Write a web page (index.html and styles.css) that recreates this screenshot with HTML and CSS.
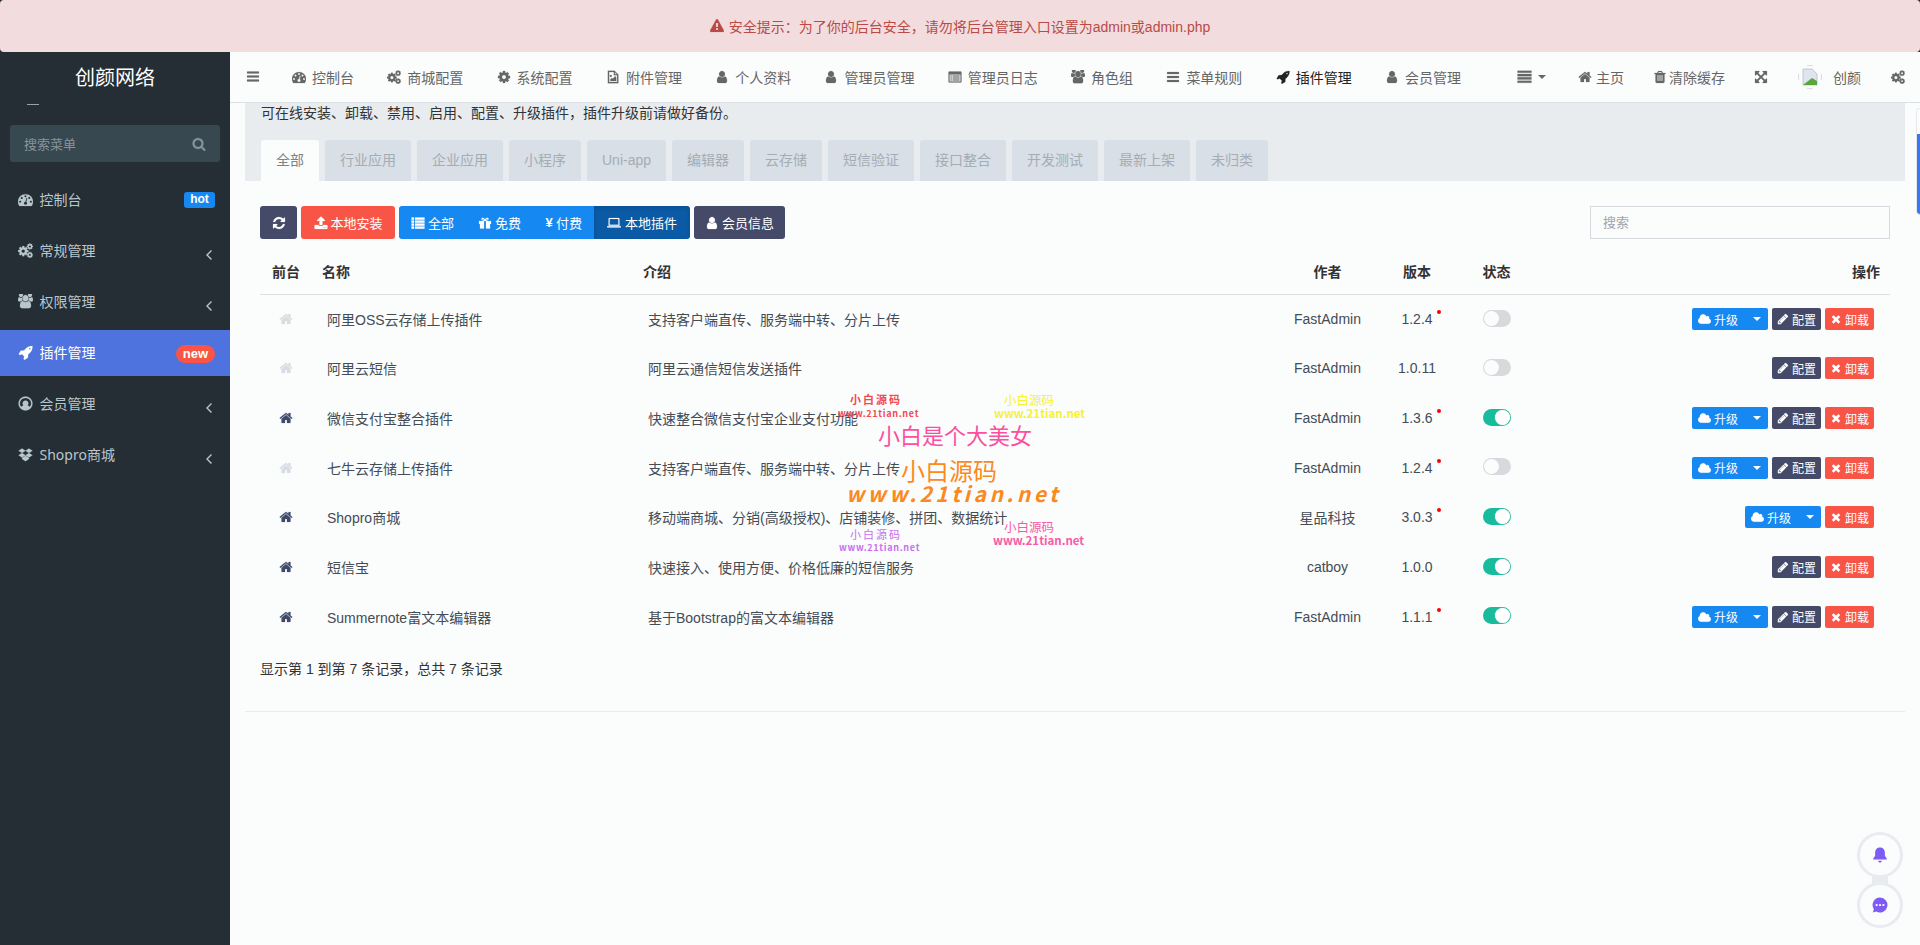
FILE: index.html
```html
<!DOCTYPE html>
<html lang="zh-CN">
<head>
    <meta charset="UTF-8">
    <title>插件管理</title>
    <link rel="stylesheet" href="styles.css">
</head>
<body>
    <svg class="sprite" xmlns="http://www.w3.org/2000/svg">
        <defs>
            <path id="p-gear" d="M1152 896q0-106-75-181t-181-75-181 75-75 181 75 181 181 75 181-75 75-181zm512-109v222q0 12-8 23t-20 13l-185 28q-19 54-39 91 35 50 107 138 10 12 10 25t-9 23q-27 37-99 108t-94 71q-12 0-26-9l-138-108q-44 23-91 38-16 136-29 186-7 28-36 28h-222q-14 0-24.500-8.500t-11.500-21.500l-28-184q-49-16-90-37l-141 107q-10 9-25 9-14 0-25-11-126-114-165-168-7-10-7-23 0-12 8-23 15-21 51-66.500t54-70.500q-27-50-41-99l-183-27q-13-2-21-12.500t-8-23.500v-222q0-12 8-23t19-13l186-28q14-46 39-92-40-57-107-138-10-12-10-24 0-10 9-23 26-36 98.500-107.500t94.500-71.500q13 0 26 10l138 107q44-23 91-38 16-136 29-186 7-28 36-28h222q14 0 24.500 8.500t11.500 21.500l28 184q49 16 90 37l142-107q9-9 24-9 13 0 25 10 129 119 165 170 7 8 7 22 0 12-8 23-15 21-51 66.500t-54 70.500q26 50 41 98l183 28q13 2 21 12.500t8 23.500z"/>
            <symbol id="i-gear" viewBox="0 0 1792 1792"><use href="#p-gear"/></symbol>
            <symbol id="i-cogs" viewBox="0 0 1792 1792">
                <use href="#p-gear" transform="translate(-90 250) scale(.8)"/>
                <use href="#p-gear" transform="translate(990 -20) scale(.48)"/>
                <use href="#p-gear" transform="translate(990 990) scale(.48)"/>
            </symbol>
            <symbol id="i-bars" viewBox="0 0 1792 1792"><path d="M1664 1344v128q0 26-19 45t-45 19h-1408q-26 0-45-19t-19-45v-128q0-26 19-45t45-19h1408q26 0 45 19t19 45zm0-512v128q0 26-19 45t-45 19h-1408q-26 0-45-19t-19-45v-128q0-26 19-45t45-19h1408q26 0 45 19t19 45zm0-512v128q0 26-19 45t-45 19h-1408q-26 0-45-19t-19-45v-128q0-26 19-45t45-19h1408q26 0 45 19t19 45z"/></symbol>
            <symbol id="i-justify" viewBox="0 0 1792 1792"><path d="M64 200h1664v256h-1664zM64 600h1664v256h-1664zM64 1000h1664v256h-1664zM64 1400h1664v256h-1664z"/></symbol>
            <symbol id="i-dashboard" viewBox="0 0 1792 1792"><path d="M384 1152q0-53-37.500-90.500t-90.500-37.500-90.500 37.500-37.500 90.500 37.500 90.500 90.500 37.500 90.500-37.500 37.500-90.500zm192-448q0-53-37.500-90.500t-90.500-37.500-90.500 37.500-37.500 90.500 37.500 90.500 90.500 37.500 90.500-37.500 37.500-90.500zm428 481l101-382q6-26-7.500-48.500t-38.500-29.500-48 6.500-30 39.500l-101 382q-60 5-107 43.500t-63 98.500q-20 77 20 146t117 89 146-20 89-117q16-60-6-117t-72-91zm660-33q0-53-37.500-90.500t-90.500-37.500-90.500 37.500-37.500 90.500 37.500 90.500 90.500 37.500 90.500-37.500 37.500-90.500zm-640-640q0-53-37.500-90.500t-90.500-37.500-90.500 37.500-37.500 90.500 37.500 90.500 90.500 37.500 90.500-37.500 37.500-90.500zm448 192q0-53-37.500-90.500t-90.500-37.500-90.500 37.500-37.500 90.500 37.500 90.500 90.500 37.500 90.500-37.500 37.500-90.500zm320 448q0 261-141 483-19 29-54 29h-1402q-35 0-54-29-141-221-141-483 0-182 71-348t191-286 286-191 348-71 348 71 286 191 191 286 71 348z"/></symbol>
            <symbol id="i-file-image" viewBox="0 0 1792 1792"><path fill-rule="evenodd" d="M240 96h860l480 480v1120h-1340zM400 256v1280h1020v-860h-420v-420zM1130 290v256h256zM620 640a120 120 0 1 0 .1 0zM560 1408v-220l180-180 120 120 320-320 120 120v480z"/></symbol>
            <symbol id="i-user" viewBox="0 0 1792 1792"><path d="M1536 1399q0 109-62.500 187t-150.500 78h-854q-88 0-150.500-78t-62.500-187q0-85 8.500-160.500t31.500-152 58.500-131 94-89 134.500-34.500q131 128 313 128t313-128q76 0 134.500 34.500t94 89 58.500 131 31.500 152 8.500 160.500zm-256-887q0 159-112.500 271.500t-271.500 112.500-271.500-112.500-112.500-271.500 112.500-271.500 271.500-112.500 271.500 112.500 112.500 271.500z"/></symbol>
            <symbol id="i-list-alt" viewBox="0 0 1792 1792"><path fill-rule="evenodd" d="M190 190h1412q126 0 126 126v1160q0 126-126 126h-1412q-126 0-126-126v-1160q0-126 126-126zM192 576v896h1408v-896zM320 704h160v128h-160zM600 704h872v128h-872zM320 960h160v128h-160zM600 960h872v128h-872zM320 1216h160v128h-160zM600 1216h872v128h-872z"/></symbol>
            <symbol id="i-users" viewBox="0 0 1920 1920"><path transform="translate(0 -160) scale(1 1.1)" d="M593 896q-162 5-265 128h-134q-82 0-138-40.500t-56-118.500q0-353 124-353 6 0 43.500 21t97.500 42.500 119 21.500q67 0 133-23-5 37-5 66 0 139 81 256zm1071 637q0 120-73 189.500t-194 69.500h-874q-121 0-194-69.500t-73-189.500q0-53 3.500-103.500t14-109 26.500-108.500 43-97.500 62-81 85.500-53.500 111.500-20q10 0 43 21.500t73 48 107 48 135 21.500 135-21.500 107-48 73-48 43-21.500q61 0 111.500 20t85.500 53.500 62 81 43 97.500 26.500 108.500 14 109 3.500 103.500zm-1024-1277q0 106-75 181t-181 75-181-75-75-181 75-181 181-75 181 75 75 181zm704 384q0 159-112.500 271.500t-271.500 112.500-271.500-112.500-112.500-271.500 112.500-271.500 271.500-112.500 271.500 112.500 112.500 271.500zm576 225q0 78-56 118.500t-138 40.500h-134q-103-123-265-128 81-117 81-256 0-29-5-66 66 23 133 23 59 0 119-21.500t97.500-42.500 43.500-21q124 0 124 353zm-128-609q0 106-75 181t-181 75-181-75-75-181 75-181 181-75 181 75 75 181z"/></symbol>
            <symbol id="i-rocket" viewBox="0 0 1792 1792"><path d="M1504 448q0-40-28-68t-68-28-68 28-28 68 28 68 68 28 68-28 28-68zm224-288q0 249-75.500 430.500t-253.500 360.500q-81 80-195 176l-20 379q-2 16-16 26l-384 224q-7 4-16 4-12 0-23-9l-64-64q-13-14-8-32l85-276-281-281-276 85q-3 1-9 1-14 0-23-9l-64-64q-17-19-5-39l224-384q10-14 26-16l379-20q96-114 176-195 188-187 358-258t431-71q14 0 24 9.500t10 22.500z"/></symbol>
            <symbol id="i-home" viewBox="0 0 1792 1792"><path d="M1472 992v480q0 26-19 45t-45 19h-384v-384h-256v384h-384q-26 0-45-19t-19-45v-480q0-1 .5-3t.5-3l575-474 575 474q1 2 1 6zm223-69l-62 74q-8 9-21 11h-3q-13 0-21-7l-692-577-692 577q-12 8-24 7-13-2-21-11l-62-74q-8-10-7-23.500t11-21.500l719-599q32-26 76-26t76 26l244 204v-195q0-14 9-23t23-9h192q14 0 23 9t9 23v408l219 182q10 8 11 21.500t-7 23.500z"/></symbol>
            <symbol id="i-trash" viewBox="0 0 1792 1792"><path d="M704 1376v-704q0-14-9-23t-23-9h-64q-14 0-23 9t-9 23v704q0 14 9 23t23 9h64q14 0 23-9t9-23zm256 0v-704q0-14-9-23t-23-9h-64q-14 0-23 9t-9 23v704q0 14 9 23t23 9h64q14 0 23-9t9-23zm256 0v-704q0-14-9-23t-23-9h-64q-14 0-23 9t-9 23v704q0 14 9 23t23 9h64q14 0 23-9t9-23zm-544-992h448l-48-117q-7-9-17-11h-317q-10 2-17 11zm928 32v64q0 14-9 23t-23 9h-96v948q0 83-47 143.500t-113 60.500h-832q-66 0-113-58.500t-47-141.500v-952h-96q-14 0-23-9t-9-23v-64q0-14 9-23t23-9h309l70-167q15-37 54-63t79-26h320q40 0 79 26t54 63l70 167h309q14 0 23 9t9 23z"/></symbol>
            <symbol id="i-expand" viewBox="0 0 1792 1792"><path d="M1411 541l-355 355 355 355 144-144q29-31 70-14 39 17 39 59v448q0 26-19 45t-45 19h-448q-42 0-59-40-17-39 14-69l144-144-355-355-355 355 144 144q31 30 14 69-17 40-59 40h-448q-26 0-45-19t-19-45v-448q0-42 40-59 39-17 69 14l144 144 355-355-355-355-144 144q-19 19-45 19-12 0-24-5-40-17-40-59v-448q0-26 19-45t45-19h448q42 0 59 40 17 39-14 69l-144 144 355 355 355-355-144-144q-31-30-14-69 17-40 59-40h448q26 0 45 19t19 45v448q0 42-39 59-13 5-25 5-26 0-45-19z"/></symbol>
            <symbol id="i-warning" viewBox="0 0 1792 1792"><path d="M1024 1375v-190q0-14-9.500-23.500t-22.500-9.500h-192q-13 0-22.500 9.500t-9.500 23.500v190q0 14 9.500 23.500t22.500 9.500h192q13 0 22.500-9.500t9.500-23.500zm-2-374l18-459q0-12-10-19-13-11-24-11h-220q-11 0-24 11-10 7-10 21l17 457q0 10 10 16.500t24 6.500h185q14 0 23.500-6.500t10.500-16.500zm-14-934l768 1408q35 63-2 126-17 29-46.500 46t-63.500 17h-1536q-34 0-63.500-17t-46.500-46q-37-63-2-126l768-1408q17-31 47-49t65-18 65 18 47 49z"/></symbol>
            <symbol id="i-search" viewBox="0 0 1792 1792"><path d="M1216 832q0-185-131.500-316.500t-316.500-131.500-316.500 131.500-131.500 316.500 131.500 316.500 316.500 131.500 316.500-131.500 131.500-316.500zm512 832q0 52-38 90t-90 38q-54 0-90-38l-343-342q-179 124-399 124-143 0-273.500-55.500t-225-150-150-225-55.500-273.500 55.500-273.500 150-225 225-150 273.500-55.500 273.500 55.500 225 150 150 225 55.500 273.500q0 220-124 399l343 343q37 37 37 90z"/></symbol>
            <symbol id="i-user-circle" viewBox="0 0 1792 1792"><path fill-rule="evenodd" d="M896 64a832 832 0 1 0 .1 0zM896 224a672 672 0 0 1 520 1098q-100-170-280-220a330 330 0 1 0-480 0q-180 50-280 220a672 672 0 0 1 520-1098z"/></symbol>
            <symbol id="i-dropbox" viewBox="0 0 1792 1792"><path d="M480 180l416 270-416 270-416-270zM1312 180l416 270-416 270-416-270zM64 990l416-270 416 270-416 270zM1312 720l416 270-416 270-416-270zM480 1320l416-270 416 270v100l-416 270-416-270z"/></symbol>
            <symbol id="i-refresh" viewBox="0 0 1792 1792"><path d="M1639 1056q0 5-1 7-64 268-268 434.500t-478 166.500q-146 0-282.500-55t-243.500-157l-129 129q-19 19-45 19t-45-19-19-45v-448q0-26 19-45t45-19h448q26 0 45 19t19 45-19 45l-137 137q71 66 161 102t187 36q134 0 250-65t186-179q11-17 53-117 8-23 30-23h192q13 0 22.500 9.500t9.500 22.500zm25-800v448q0 26-19 45t-45 19h-448q-26 0-45-19t-19-45 19-45l138-138q-148-137-349-137-134 0-250 65t-186 179q-11 17-53 117-8 23-30 23h-199q-13 0-22.500-9.500t-9.500-22.500v-7q65-268 270-434.500t480-166.500q146 0 284 55.500t245 156.500l130-129q19-19 45-19t45 19 19 45z"/></symbol>
            <symbol id="i-upload" viewBox="0 0 1792 1792"><path d="M1344 1472q0-26-19-45t-45-19-45 19-19 45 19 45 45 19 45-19 19-45zm256 0q0-26-19-45t-45-19-45 19-19 45 19 45 45 19 45-19 19-45zm128-224v320q0 40-28 68t-68 28h-1472q-40 0-68-28t-28-68v-320q0-40 28-68t68-28h427q21 56 70.500 92t110.500 36h256q61 0 110.500-36t70.500-92h427q40 0 68 28t28 68zm-325-648q-17 40-59 40h-256v448q0 26-19 45t-45 19h-256q-26 0-45-19t-19-45v-448h-256q-42 0-59-40-17-39 14-69l448-448q18-19 45-19t45 19l448 448q31 30 14 69z"/></symbol>
            <symbol id="i-list" viewBox="0 0 1792 1792"><path d="M64 192h320v272h-320zM512 192h1216v272h-1216zM64 576h320v272h-320zM512 576h1216v272h-1216zM64 960h320v272h-320zM512 960h1216v272h-1216zM64 1344h320v272h-320zM512 1344h1216v272h-1216z"/></symbol>
            <symbol id="i-gift" viewBox="0 0 1792 1792"><path fill-rule="evenodd" d="M128 640h576v-70q-260-10-260-190 0-150 150-150 130 0 302 200 172-200 302-200 150 0 150 150 0 180-260 190v70h576v384h-128v576h-512v-960h-256v960h-512v-576h-128zM800 540q-110-150-200-150-50 0-50 50 0 100 250 100zM992 540q250 0 250-100 0-50-50-50-90 0-200 150z"/></symbol>
            <symbol id="i-laptop" viewBox="0 0 1792 1792"><path fill-rule="evenodd" d="M300 256h1192q96 0 96 96v896h-1384v-896q0-96 96-96zM332 384v736h1128v-736zM0 1312h1792v64q0 96-96 96h-1600q-96 0-96-96z"/></symbol>
            <symbol id="i-cloud" viewBox="0 0 1920 1792"><path d="M1920 1216q0 159-112.500 271.500t-271.500 112.500h-1088q-185 0-316.500-131.500t-131.500-316.500q0-132 71-241.500t187-163.500q-2-28-2-43 0-212 150-362t362-150q158 0 286.500 88t187.500 230q70-62 166-62 106 0 181 75t75 181q0 75-41 138 129 30 213 134.500t84 239.500z"/></symbol>
            <symbol id="i-pencil" viewBox="0 0 1792 1792"><path d="M491 1536l91-91-235-235-91 91v107h128v128h107zm523-928q0-22-22-22-10 0-17 7l-542 542q-7 7-7 17 0 22 22 22 10 0 17-7l542-542q7-7 7-17zm-54-192l416 416-832 832h-416v-416zm683 96q0 53-37 90l-166 166-416-416 166-165q36-38 90-38 53 0 91 38l235 234q37 39 37 91z"/></symbol>
            <symbol id="i-times" viewBox="0 0 1792 1792"><path d="M1490 1322q0 40-28 68l-136 136q-28 28-68 28t-68-28l-294-294-294 294q-28 28-68 28t-68-28l-136-136q-28-28-28-68t28-68l294-294-294-294q-28-28-28-68t28-68l136-136q28-28 68-28t68 28l294 294 294-294q28-28 68-28t68 28l136 136q28 28 28 68t-28 68l-294 294 294 294q28 28 28 68z"/></symbol>
            <symbol id="i-angle" viewBox="0 0 8 12"><path d="M6.500 1.500L2 6l4.500 4.500" fill="none" stroke="currentColor" stroke-width="1.400"/></symbol>
            <symbol id="i-bell" viewBox="0 0 24 24"><path d="M12 2c-4 0-6.500 3-6.500 7v4L3 16.500V18h18v-1.500L18.500 13V9c0-4-2.500-7-6.500-7zM9.500 19.500h5c-.3 1.500-1.200 2.500-2.500 2.500s-2.200-1-2.500-2.500z"/></symbol>
            <symbol id="i-chat" viewBox="0 0 24 24"><path fill-rule="evenodd" d="M12 2a10 10 0 1 1-5 18.700L2.500 22l1.300-4.500A10 10 0 0 1 12 2zM7.500 10.500a1.500 1.500 0 1 0 .1 0zM12 10.500a1.500 1.500 0 1 0 .1 0zM16.500 10.500a1.500 1.500 0 1 0 .1 0z"/></symbol>
        </defs>
    </svg>

    <div class="alert"><svg class="ico"><use href="#i-warning"/></svg><span>安全提示&#65306;为了你的后台安全&#65292;请勿将后台管理入口设置为admin或admin.php</span></div>

    <div class="layout">
        <!-- 左侧菜单 -->
        <aside class="sidebar">
            <div class="logo">创颜网络</div>
            <div class="logo-sliver"></div>
            <div class="side-search">
                <span>搜索菜单</span>
                <svg class="ico"><use href="#i-search"/></svg>
            </div>
            <ul class="side-menu">
                <li><svg class="ico"><use href="#i-dashboard"/></svg><span>控制台</span><em class="tag tag-hot">hot</em></li>
                <li><svg class="ico"><use href="#i-cogs"/></svg><span>常规管理</span><svg class="angle"><use href="#i-angle"/></svg></li>
                <li><svg class="ico"><use href="#i-users"/></svg><span>权限管理</span><svg class="angle"><use href="#i-angle"/></svg></li>
                <li class="active"><svg class="ico"><use href="#i-rocket"/></svg><span>插件管理</span><em class="tag tag-new">new</em></li>
                <li><svg class="ico"><use href="#i-user-circle"/></svg><span>会员管理</span><svg class="angle"><use href="#i-angle"/></svg></li>
                <li><svg class="ico"><use href="#i-dropbox"/></svg><span>Shopro商城</span><svg class="angle"><use href="#i-angle"/></svg></li>
            </ul>
        </aside>

        <div class="main">
            <!-- 顶部导航 -->
            <header class="topbar">
                <svg class="ico toggle-menu"><use href="#i-bars"/></svg>
                <nav class="nav-tabs">
                    <a><svg class="ico"><use href="#i-dashboard"/></svg>控制台</a>
                    <a><svg class="ico"><use href="#i-cogs"/></svg>商城配置</a>
                    <a><svg class="ico"><use href="#i-gear"/></svg>系统配置</a>
                    <a><svg class="ico"><use href="#i-file-image"/></svg>附件管理</a>
                    <a><svg class="ico"><use href="#i-user"/></svg>个人资料</a>
                    <a><svg class="ico"><use href="#i-user"/></svg>管理员管理</a>
                    <a><svg class="ico"><use href="#i-list-alt"/></svg>管理员日志</a>
                    <a><svg class="ico"><use href="#i-users"/></svg>角色组</a>
                    <a><svg class="ico"><use href="#i-bars"/></svg>菜单规则</a>
                    <a class="current"><svg class="ico"><use href="#i-rocket"/></svg>插件管理</a>
                    <a><svg class="ico"><use href="#i-user"/></svg>会员管理</a>
                </nav>
                <div class="nav-right">
                    <a class="more"><svg class="ico"><use href="#i-justify"/></svg><i class="caret"></i></a>
                    <a class="tight"><svg class="ico"><use href="#i-home"/></svg>主页</a>
                    <a class="tight clear"><svg class="ico"><use href="#i-trash"/></svg>清除缓存</a>
                    <a><svg class="ico"><use href="#i-expand"/></svg></a>
                    <a class="profile">
                        <svg class="avatar" viewBox="0 0 24 24">
                            <circle cx="12" cy="12" r="11.500" fill="none" stroke="#d5d8dc" stroke-dasharray="6 12" stroke-dashoffset="3"/>
                            <path d="M5 4h9l5 5v11H5z" fill="#dfe4ee" stroke="#b8bfcc" stroke-width=".8"/>
                            <path d="M5 20l9-7 5 3v4z" fill="#5aa63c"/>
                        </svg>创颜
                    </a>
                    <a><svg class="ico"><use href="#i-cogs"/></svg></a>
                </div>
            </header>

            <div class="content">
                <div class="panel">
                    <div class="panel-heading">
                        <p>可在线安装、卸载、禁用、启用、配置、升级插件&#65292;插件升级前请做好备份。</p>
                        <ul class="cate-tabs">
                            <li class="active">全部</li>
                            <li>行业应用</li>
                            <li>企业应用</li>
                            <li>小程序</li>
                            <li>Uni-app</li>
                            <li>编辑器</li>
                            <li>云存储</li>
                            <li>短信验证</li>
                            <li>接口整合</li>
                            <li>开发测试</li>
                            <li>最新上架</li>
                            <li>未归类</li>
                        </ul>
                    </div>
                    <div class="panel-body">
                        <div class="toolbar">
                            <button class="btn btn-dark btn-refresh"><svg class="ico"><use href="#i-refresh"/></svg></button>
                            <button class="btn btn-red"><svg class="ico"><use href="#i-upload"/></svg>本地安装</button>
                            <div class="btn-group">
                                <button class="btn btn-blue"><svg class="ico"><use href="#i-list"/></svg>全部</button>
                                <button class="btn btn-blue"><svg class="ico"><use href="#i-gift"/></svg>免费</button>
                                <button class="btn btn-blue"><b class="yen">¥</b>付费</button>
                                <button class="btn btn-blue on"><svg class="ico"><use href="#i-laptop"/></svg>本地插件</button>
                            </div>
                            <button class="btn btn-dark btn-member"><svg class="ico"><use href="#i-user"/></svg>会员信息</button>
                            <input class="search" type="text" placeholder="搜索">
                        </div>

                        <table class="addons">
                            <colgroup>
                                <col class="c-front"><col class="c-name"><col class="c-intro"><col class="c-author"><col class="c-ver"><col class="c-state"><col>
                            </colgroup>
                            <thead>
                                <tr>
                                    <th class="center">前台</th>
                                    <th>名称</th>
                                    <th>介绍</th>
                                    <th class="center">作者</th>
                                    <th class="center">版本</th>
                                    <th class="center">状态</th>
                                    <th class="right">操作</th>
                                </tr>
                            </thead>
                            <tbody>
                                <tr>
                                    <td class="center"><svg class="ico home"><use href="#i-home"/></svg></td>
                                    <td class="pad">阿里OSS云存储上传插件</td>
                                    <td class="pad">支持客户端直传、服务端中转、分片上传</td>
                                    <td class="center">FastAdmin</td>
                                    <td class="center"><span class="ver dot">1.2.4</span></td>
                                    <td class="center"><i class="switch"></i></td>
                                    <td class="ops"><div class="op-row"><span class="mini mini-blue"><svg class="ico"><use href="#i-cloud"/></svg>升级<i class="caret"></i></span><span class="mini mini-dark"><svg class="ico"><use href="#i-pencil"/></svg>配置</span><span class="mini mini-red"><svg class="ico"><use href="#i-times"/></svg>卸载</span></div></td>
                                </tr>
                                <tr>
                                    <td class="center"><svg class="ico home"><use href="#i-home"/></svg></td>
                                    <td class="pad">阿里云短信</td>
                                    <td class="pad">阿里云通信短信发送插件</td>
                                    <td class="center">FastAdmin</td>
                                    <td class="center"><span class="ver">1.0.11</span></td>
                                    <td class="center"><i class="switch"></i></td>
                                    <td class="ops"><div class="op-row"><span class="mini mini-dark"><svg class="ico"><use href="#i-pencil"/></svg>配置</span><span class="mini mini-red"><svg class="ico"><use href="#i-times"/></svg>卸载</span></div></td>
                                </tr>
                                <tr>
                                    <td class="center"><svg class="ico home enabled"><use href="#i-home"/></svg></td>
                                    <td class="pad">微信支付宝整合插件</td>
                                    <td class="pad">快速整合微信支付宝企业支付功能</td>
                                    <td class="center">FastAdmin</td>
                                    <td class="center"><span class="ver dot">1.3.6</span></td>
                                    <td class="center"><i class="switch on"></i></td>
                                    <td class="ops"><div class="op-row"><span class="mini mini-blue"><svg class="ico"><use href="#i-cloud"/></svg>升级<i class="caret"></i></span><span class="mini mini-dark"><svg class="ico"><use href="#i-pencil"/></svg>配置</span><span class="mini mini-red"><svg class="ico"><use href="#i-times"/></svg>卸载</span></div></td>
                                </tr>
                                <tr>
                                    <td class="center"><svg class="ico home"><use href="#i-home"/></svg></td>
                                    <td class="pad">七牛云存储上传插件</td>
                                    <td class="pad">支持客户端直传、服务端中转、分片上传</td>
                                    <td class="center">FastAdmin</td>
                                    <td class="center"><span class="ver dot">1.2.4</span></td>
                                    <td class="center"><i class="switch"></i></td>
                                    <td class="ops"><div class="op-row"><span class="mini mini-blue"><svg class="ico"><use href="#i-cloud"/></svg>升级<i class="caret"></i></span><span class="mini mini-dark"><svg class="ico"><use href="#i-pencil"/></svg>配置</span><span class="mini mini-red"><svg class="ico"><use href="#i-times"/></svg>卸载</span></div></td>
                                </tr>
                                <tr>
                                    <td class="center"><svg class="ico home enabled"><use href="#i-home"/></svg></td>
                                    <td class="pad">Shopro商城</td>
                                    <td class="pad">移动端商城、分销(高级授权)、店铺装修、拼团、数据统计</td>
                                    <td class="center">星品科技</td>
                                    <td class="center"><span class="ver dot">3.0.3</span></td>
                                    <td class="center"><i class="switch on"></i></td>
                                    <td class="ops"><div class="op-row"><span class="mini mini-blue"><svg class="ico"><use href="#i-cloud"/></svg>升级<i class="caret"></i></span><span class="mini mini-red"><svg class="ico"><use href="#i-times"/></svg>卸载</span></div></td>
                                </tr>
                                <tr>
                                    <td class="center"><svg class="ico home enabled"><use href="#i-home"/></svg></td>
                                    <td class="pad">短信宝</td>
                                    <td class="pad">快速接入、使用方便、价格低廉的短信服务</td>
                                    <td class="center">catboy</td>
                                    <td class="center"><span class="ver">1.0.0</span></td>
                                    <td class="center"><i class="switch on"></i></td>
                                    <td class="ops"><div class="op-row"><span class="mini mini-dark"><svg class="ico"><use href="#i-pencil"/></svg>配置</span><span class="mini mini-red"><svg class="ico"><use href="#i-times"/></svg>卸载</span></div></td>
                                </tr>
                                <tr>
                                    <td class="center"><svg class="ico home enabled"><use href="#i-home"/></svg></td>
                                    <td class="pad">Summernote富文本编辑器</td>
                                    <td class="pad">基于Bootstrap的富文本编辑器</td>
                                    <td class="center">FastAdmin</td>
                                    <td class="center"><span class="ver dot">1.1.1</span></td>
                                    <td class="center"><i class="switch on"></i></td>
                                    <td class="ops"><div class="op-row"><span class="mini mini-blue"><svg class="ico"><use href="#i-cloud"/></svg>升级<i class="caret"></i></span><span class="mini mini-dark"><svg class="ico"><use href="#i-pencil"/></svg>配置</span><span class="mini mini-red"><svg class="ico"><use href="#i-times"/></svg>卸载</span></div></td>
                                </tr>
                            </tbody>
                        </table>
                        <div class="pager">显示第 1 到第 7 条记录&#65292;总共 7 条记录</div>
                    </div>
                </div>
            </div>

            <!-- 右侧浮动 -->
            <div class="side-tab"></div>
            <div class="float-neck"></div>
            <div class="float-btn float-bell"><svg class="ico"><use href="#i-bell"/></svg></div>
            <div class="float-btn float-chat"><svg class="ico"><use href="#i-chat"/></svg></div>
        </div>
    </div>

    <!-- 水印 -->
    <div class="mark">
        <span class="m m1">小白源码</span>
        <span class="m m2">www.21tian.net</span>
        <span class="m m3">小白源码</span>
        <span class="m m4">www.21tian.net</span>
        <span class="m m5">小白是个大美女</span>
        <span class="m m6">小白源码</span>
        <span class="m m7">www.21tian.net</span>
        <span class="m m8">小白源码</span>
        <span class="m m9">www.21tian.net</span>
        <span class="m m10">小白源码</span>
        <span class="m m11">www.21tian.net</span>
    </div>
</body>
</html>
```

FILE: styles.css
```css
* {
    box-sizing: border-box;
}
html, body {
    height: 100%;
}
body {
    margin: 0;
    overflow: hidden;
    background-color: #252d35;
    font-family: "Liberation Sans", "Noto Sans CJK SC", sans-serif;
    font-size: 14px;
    color: #444c55;
}
p, ul {
    margin: 0;
    padding: 0;
}
ul {
    list-style: none;
}
.sprite {
    display: none;
}
.ico {
    width: 14px;
    height: 14px;
    fill: currentColor;
    stroke: currentColor;
    stroke-width: 24;
    flex: none;
}
.caret {
    display: inline-block;
    width: 0;
    height: 0;
    border-left: 4px solid transparent;
    border-right: 4px solid transparent;
    border-top: 4px solid currentColor;
}

/* 顶部提示 */
.alert {
    height: 52px;
    display: flex;
    align-items: center;
    justify-content: center;
    gap: 5px;
    background-color: #f2dcdd;
    color: #b94a48;
    border-radius: 4px;
    font-size: 14px;
}
.layout {
    display: flex;
    height: calc(100vh - 52px);
}

/* 左侧菜单 */
.sidebar {
    width: 230px;
    flex: none;
    background-color: #252d35;
    color: #b8c7ce;
}
.logo {
    height: 50px;
    padding-top: 1px;
    line-height: 50px;
    text-align: center;
    color: #fff;
    font-size: 20px;
}
.logo-sliver {
    width: 12px;
    height: 1px;
    margin: 2px 0 0 27px;
    background-color: #9aa2a8;
}
.side-search {
    display: flex;
    align-items: center;
    justify-content: space-between;
    height: 37px;
    margin: 20px 10px 0;
    padding: 0 14px;
    background-color: #374850;
    border-radius: 3px;
    color: #87949b;
    font-size: 13px;
}
.side-menu {
    margin-top: 15px;
}
.side-menu li {
    display: flex;
    align-items: center;
    gap: 6.500px;
    height: 46px;
    margin-bottom: 5px;
    padding: 0 15px 2px 18px;
    font-family: "Noto Sans", "Noto Sans CJK SC", sans-serif;
}
.side-menu .ico {
    width: 15px;
    height: 15px;
}
.side-menu li.active {
    background-color: #4e73df;
    color: #fff;
}
.angle {
    width: 8px;
    height: 12px;
    margin: 10px 2px 0 auto;
}
.tag {
    margin-left: auto;
    font-style: normal;
    font-weight: bold;
    color: #fff;
    text-align: center;
    font-family: "Liberation Sans", sans-serif;
}
.tag-hot {
    width: 31px;
    height: 16px;
    line-height: 15px;
    margin-top: 1px;
    font-size: 12px;
    border-radius: 3px;
    background-color: #1688f1;
}
.tag-new {
    width: 39px;
    height: 18px;
    line-height: 17px;
    margin-top: 3px;
    font-size: 13px;
    border-radius: 9px;
    background-color: #f95547;
}

/* 顶部导航 */
.main {
    position: relative;
    flex: 1;
    min-width: 0;
    background-color: #fbfcfc;
}
.topbar {
    display: flex;
    align-items: center;
    height: 51px;
    padding: 0 15px 1px 16px;
    border-bottom: 1px solid #dce1e6;
    color: #666;
}
.toggle-menu {
    width: 14px;
    height: 15px;
}
.nav-tabs {
    display: flex;
    gap: 33.300px;
    margin-left: 32px;
}
.nav-tabs a,
.nav-right a {
    display: flex;
    align-items: center;
    gap: 6px;
    white-space: nowrap;
}
.nav-tabs a.current {
    color: #222;
}
.nav-right {
    display: flex;
    align-items: center;
    gap: 30px;
    margin-left: auto;
}
.nav-right .tight {
    gap: 4px;
}
.nav-right .clear {
    margin-right: -1px;
}
.nav-right .clear .ico {
    margin: 0 -1.500px;
}
.nav-right .more {
    margin-right: 2px;
}
.nav-right .more .ico {
    width: 15px;
    height: 15px;
}
.avatar {
    width: 24px;
    height: 24px;
    margin-right: 5px;
}
.profile {
    gap: 5px;
}

/* 主体 */
.content {
    padding: 0 15px;
}
.panel {
    border-bottom: 1px solid #e8ecf0;
}
.panel-heading {
    height: 78px;
    padding: 0 16px;
    background-color: #e8ecef;
    color: #333;
}
.panel-heading p {
    line-height: 20px;
}
.cate-tabs {
    display: flex;
    gap: 6px;
    margin-top: 17px;
}
.cate-tabs li {
    height: 41px;
    line-height: 41px;
    padding: 0 15px;
    background-color: #d8dfe6;
    border-radius: 3px 3px 0 0;
    color: #a4adb5;
}
.cate-tabs li.active {
    background-color: #fbfcfc;
    color: #7b8288;
}
.panel-body {
    padding: 25px 15px 32px;
}
.toolbar {
    display: flex;
    gap: 4px;
}
.btn {
    display: flex;
    align-items: center;
    gap: 3px;
    height: 33px;
    padding: 0 12.500px;
    border: none;
    border-radius: 3px;
    color: #fff;
    font: inherit;
    font-size: 13px;
}
.btn-dark {
    background-color: #444a68;
}
.btn-refresh {
    width: 37px;
    justify-content: center;
    padding: 0;
}
.btn-member {
    padding: 0 11px;
}
.btn-red {
    background-color: #f95547;
}
.btn-blue {
    padding: 0 12px;
    background-color: #1688f1;
    border-radius: 0;
}
.btn-blue.on {
    padding: 0 13px;
    gap: 4px;
    background-color: #0a5aa5;
    box-shadow: inset 0 2px 4px rgba(0, 0, 0, .12);
}
.btn-group {
    display: flex;
    border-radius: 3px;
    overflow: hidden;
}
.yen {
    width: 8px;
    font-size: 13px;
}
.search {
    width: 300px;
    height: 33px;
    margin-left: auto;
    padding: 0 12px;
    border: 1px solid #d5d9dd;
    background-color: #fbfcfc;
    font: inherit;
    font-size: 13px;
}
.search::placeholder {
    color: #a0a5aa;
}

/* 表格 */
.addons {
    width: 100%;
    margin-top: 10px;
    table-layout: fixed;
    border-collapse: collapse;
}
.c-front {
    width: 52px;
}
.c-name {
    width: 321px;
}
.c-intro {
    width: 637px;
}
.c-author {
    width: 115px;
}
.c-ver {
    width: 64px;
}
.c-state {
    width: 95px;
}
.addons th {
    height: 45px;
    padding: 0 10px;
    border-bottom: 1px solid #dcdfe3;
    text-align: left;
    font-weight: bold;
    color: #333;
}
.addons td {
    height: 49.670px;
    padding: 0;
    white-space: nowrap;
}
.addons th.center,
.addons td.center {
    text-align: center;
}
.addons th.right {
    text-align: right;
}
.addons td.pad {
    padding-left: 15px;
}
.addons td.ops {
    padding-right: 16px;
}
.home {
    display: block;
    margin: 0 auto;
    color: #d8dce3;
}
.home.enabled {
    color: #3f4a6b;
}
.ver {
    position: relative;
}
.ver.dot::after {
    content: "";
    position: absolute;
    top: -1px;
    right: -8px;
    width: 4px;
    height: 4px;
    border-radius: 50%;
    background-color: #f00;
}
.switch {
    position: relative;
    display: block;
    width: 28px;
    height: 17px;
    margin: -2px auto 0;
    border-radius: 9px;
    background-color: #d7d9dd;
}
.switch::after {
    content: "";
    position: absolute;
    top: 1px;
    left: 1px;
    width: 15px;
    height: 15px;
    border-radius: 50%;
    background-color: #fbfcfc;
    box-shadow: 0 0 1px #c9d0e0;
}
.switch.on {
    background-color: #18bc9c;
}
.switch.on::after {
    left: 12px;
    background-color: #fff;
}
.op-row {
    display: flex;
    justify-content: flex-end;
    gap: 4px;
}
.mini {
    display: flex;
    align-items: center;
    gap: 3px;
    height: 22px;
    padding: 0 5px;
    border-radius: 2px;
    color: #fff;
    font-size: 12px;
}
.mini .ico {
    width: 12px;
    height: 12px;
}
.mini-blue {
    width: 76px;
    padding: 0 6px;
    background-color: #1688f1;
}
.mini-blue .ico {
    width: 13px;
}
.mini-blue .caret {
    margin-left: auto;
    margin-right: 1px;
}
.mini-dark {
    background-color: #444a68;
}
.mini-red {
    background-color: #f95547;
}
.pager {
    margin-top: 17px;
    line-height: 20px;
    color: #333;
}

/* 右侧浮动 */
.side-tab {
    position: absolute;
    top: 56px;
    right: 0;
    width: 4px;
    height: 107px;
    border: 1px solid #e4e8ec;
    border-right: none;
    border-radius: 4px 0 0 4px;
    background: linear-gradient(#fbfcfc 25px, #3a78f0 25px);
}
.float-neck {
    position: absolute;
    top: 823px;
    right: 32px;
    width: 16px;
    height: 10px;
    background-color: #e8ecf0;
}
.float-btn {
    position: absolute;
    right: 17px;
    width: 46px;
    height: 46px;
    display: flex;
    align-items: center;
    justify-content: center;
    border-radius: 50%;
    background-color: #fbfcfc;
    border: 3px solid #e8ecf0;
    color: #7c5cf5;
}
.float-btn .ico {
    width: 18px;
    height: 18px;
    stroke: none;
}
.float-bell {
    top: 780px;
}
.float-chat {
    top: 830px;
}

/* 水印 */
.mark {
    position: absolute;
    top: 0;
    left: 0;
    width: 0;
    height: 0;
}
.m {
    position: absolute;
    white-space: nowrap;
    line-height: 1;
    font-family: "Noto Sans CJK SC", "DejaVu Sans", sans-serif;
}
.m1 {
    left: 850px;
    top: 394px;
    font-size: 11px;
    letter-spacing: 2px;
    font-weight: bold;
    color: #f4484c;
}
.m2 {
    left: 838px;
    top: 409px;
    font-size: 9px;
    letter-spacing: .7px;
    font-weight: bold;
    color: #f4484c;
}
.m3 {
    left: 1004px;
    top: 394px;
    font-size: 12.500px;
    color: #f6f236;
}
.m4 {
    left: 994px;
    top: 408px;
    font-size: 11.500px;
    color: #f6f236;
    font-weight: bold;
}
.m5 {
    left: 878px;
    top: 423px;
    font-size: 22px;
    color: #fb4fa0;
}
.m6 {
    left: 901px;
    top: 458px;
    font-size: 24px;
    color: #fb8a1e;
}
.m7 {
    left: 846px;
    top: 483px;
    font-size: 21px;
    letter-spacing: 3.500px;
    font-style: italic;
    font-weight: bold;
    color: #fb8a1e;
}
.m8 {
    left: 850px;
    top: 529px;
    font-size: 11px;
    letter-spacing: 2px;
    color: #c86ff0;
}
.m9 {
    left: 839px;
    top: 543px;
    font-size: 9px;
    letter-spacing: .7px;
    font-weight: bold;
    color: #c86ff0;
}
.m10 {
    left: 1004px;
    top: 521px;
    font-size: 12.500px;
    color: #f75ba6;
}
.m11 {
    left: 993px;
    top: 535px;
    font-size: 11.500px;
    font-weight: bold;
    color: #f75ba6;
}
```
